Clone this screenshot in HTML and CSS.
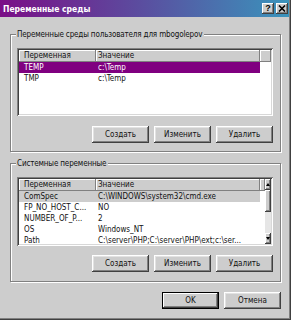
FILE: index.html
```html
<!DOCTYPE html>
<html>
<head>
<meta charset="utf-8">
<link rel="stylesheet" href="styles.css">
</head>
<body>
<div class="window">
  <div class="titlebar">
    <div class="title">Переменные среды</div>
    <div class="tbtns">
      <div class="tbtn">?</div>
      <div class="tbtn">
        <svg width="8" height="7" viewBox="0 0 8 7"><path d="M1 0.5 L7 6.5 M7 0.5 L1 6.5" stroke="#000" stroke-width="1.6" fill="none"/></svg>
      </div>
    </div>
  </div>
  <div class="client">
    <div class="group g1">
      <div class="glabel">Переменные среды пользователя для mbogolepov</div>
      <div class="list l1">
        <div class="lv">
          <div class="lv-head"><div class="hc">Переменная</div><div class="hc c2">Значение</div><div class="hc"></div></div>
          <div class="row sel"><div class="c1">TEMP</div><div class="c2">c:\Temp</div></div>
          <div class="row"><div class="c1">TMP</div><div class="c2">c:\Temp</div></div>
        </div>
      </div>
      <div class="btns">
        <div class="btn">Создать</div>
        <div class="btn">Изменить</div>
        <div class="btn">Удалить</div>
      </div>
    </div>
    <div class="group g2">
      <div class="glabel">Системные переменные</div>
      <div class="list l2">
        <div class="lv">
          <div class="lv-head"><div class="hc">Переменная</div><div class="hc c2">Значение</div><div class="hc"></div></div>
          <div class="row gsel"><div class="c1">ComSpec</div><div class="c2">C:\WINDOWS\system32\cmd.exe</div></div>
          <div class="row"><div class="c1">FP_NO_HOST_C...</div><div class="c2">NO</div></div>
          <div class="row"><div class="c1">NUMBER_OF_P...</div><div class="c2">2</div></div>
          <div class="row"><div class="c1">OS</div><div class="c2">Windows_NT</div></div>
          <div class="row"><div class="c1">Path</div><div class="c2">C:\server\PHP;C:\server\PHP\ext;c:\ser...</div></div>
        </div>
        <div class="sb">
          <div class="sb-btn"><span class="arr up"></span></div>
          <div class="sb-thumb"></div>
          <div class="sb-track"></div>
          <div class="sb-btn"><span class="arr down"></span></div>
        </div>
      </div>
      <div class="btns">
        <div class="btn">Создать</div>
        <div class="btn">Изменить</div>
        <div class="btn">Удалить</div>
      </div>
    </div>
  </div>
  <div class="footer">
    <div class="btn def">OK</div>
    <div class="btn">Отмена</div>
  </div>
</div>
</body>
</html>
```

FILE: styles.css
```css
* { box-sizing: border-box; }
body {
  margin: 0;
  background: #cdcdcd;
  font-family: "DejaVu Sans Condensed", "DejaVu Sans", sans-serif;
  font-stretch: condensed;
  font-size: 8px;
  color: #111;
}
.window {
  width: 291px;
  height: 320px;
  background: #cdcdcd;
  border-right: 1px solid #404040;
  border-bottom: 1px solid #404040;
  box-shadow: inset -1px -1px 0 #808080;
  display: flex;
  flex-direction: column;
}
.titlebar {
  height: 17px;
  margin-right: 1px;
  background: linear-gradient(to right, #7a0f86, #5a4fa0 50%, #3a94bc);
  display: flex;
  align-items: center;
  padding: 0 1px 0 3px;
}
.title {
  flex: 1;
  color: #fff;
  font-weight: bold;
  font-size: 8.5px;
}
.tbtns { display: flex; gap: 2px; }
.tbtn {
  width: 12px;
  height: 11px;
  background: #cdcdcd;
  box-shadow: inset -1px -1px 0 #404040, inset 1px 1px 0 #fff, inset -2px -2px 0 #808080;
  display: flex;
  align-items: center;
  justify-content: center;
  font-family: "Liberation Sans", Arial, sans-serif;
  font-weight: bold;
  font-size: 9px;
  color: #000;
  line-height: 11px;
}
.client {
  padding: 17px 9px 0 10px;
  display: flex;
  flex-direction: column;
  gap: 11px;
}
.group {
  position: relative;
  border: 1px solid #808080;
  box-shadow: inset 1px 1px 0 #fff, 1px 1px 0 #fff;
  padding: 13px 7px 8px 6px;
}
.g2 { padding-bottom: 9px; }
.glabel {
  position: absolute;
  top: -6px;
  left: 5px;
  padding: 0 2px 0 1px;
  background: #cdcdcd;
  line-height: 11px;
  letter-spacing: -0.15px;
}
.list {
  background: #fff;
  padding: 2px;
  display: flex;
  box-shadow: inset 1px 1px 0 #808080, inset -1px -1px 0 #fff, inset 2px 2px 0 #404040, inset -2px -2px 0 #d8d8d8;
}
.l1 { height: 68px; }
.l2 { height: 69px; }
.lv { flex: 1; display: flex; flex-direction: column; }
.lv-head {
  display: grid;
  grid-template-columns: 77px 164px 1fr;
  height: 12px;
}
.hc {
  background: #cdcdcd;
  box-shadow: inset -1px -1px 0 #808080, inset 1px 1px 0 #fff;
  padding-left: 5px;
  line-height: 12px;
  white-space: nowrap;
  overflow: hidden;
}
.hc.c2 { padding-left: 2px; }
.row {
  display: grid;
  grid-template-columns: 77px 164px;
  width: 241px;
  height: 11px;
  line-height: 11px;
  white-space: nowrap;
}
.row .c1 { padding-left: 5px; overflow: hidden; }
.row .c2 { padding-left: 2px; overflow: hidden; }
.row.sel { background: #800080; color: #fff; }
.row.gsel { background: #cdcdcd; }
.sb {
  width: 11px;
  display: flex;
  flex-direction: column;
  background: #e6e6e6;
}
.sb-btn, .sb-thumb {
  background: #cdcdcd;
  box-shadow: inset -1px -1px 0 #404040, inset 1px 1px 0 #fff, inset -2px -2px 0 #808080;
}
.sb-btn {
  height: 11px;
  display: flex;
  align-items: center;
  justify-content: center;
}
.sb-thumb { height: 22px; }
.sb-track { flex: 1; }
.arr { width: 0; height: 0; border-left: 2.5px solid transparent; border-right: 2.5px solid transparent; }
.arr.up { border-bottom: 3px solid #000; }
.arr.down { border-top: 3px solid #000; }
.btns {
  display: flex;
  justify-content: flex-end;
  gap: 5px;
  margin-top: 10px;
}
.g2 .btns { margin-top: 9px; }
.btn {
  width: 57px;
  height: 17px;
  background: #cdcdcd;
  box-shadow: inset -1px -1px 0 #404040, inset 1px 1px 0 #fff, inset -2px -2px 0 #808080, inset 2px 2px 0 #e2e2e2;
  display: flex;
  align-items: center;
  justify-content: center;
}
.btn.def {
  box-shadow: inset 0 0 0 1px #000, inset -2px -2px 0 #404040, inset 2px 2px 0 #fff, inset -3px -3px 0 #808080;
}
.footer {
  display: flex;
  justify-content: flex-end;
  gap: 5px;
  padding: 10px 9px 0 0;
}
```
